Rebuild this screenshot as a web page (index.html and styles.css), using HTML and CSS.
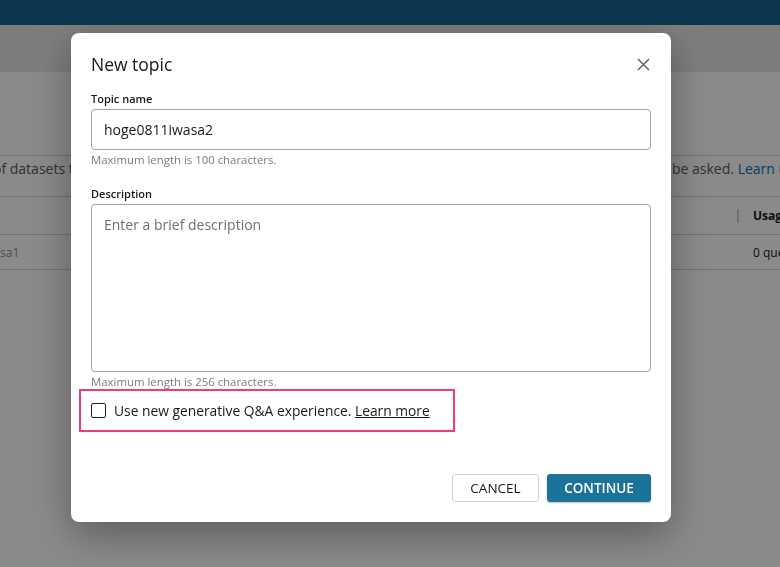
FILE: index.html
```html
<!DOCTYPE html>
<html lang="en">
<head>
<meta charset="utf-8">
<title>New topic</title>
<link rel="stylesheet" href="styles.css">
</head>
<body>
<div class="page">
  <header class="topbar"></header>
  <div class="subbar"></div>
  <main class="content">
    <div class="intro"></div>
    <div class="desc-row">
      <span class="desc-left">of datasets that users can ask questions about</span>
      <span class="desc-right">be asked. <a class="bg-link">Learn more</a></span>
    </div>
    <div class="trow thead">
      <span class="cell-left"></span>
      <span class="cell-right"><span class="sep"></span><b>Usage</b></span>
    </div>
    <div class="trow tbody">
      <span class="cell-left muted">sa1</span>
      <span class="cell-right cell-body">0 questions</span>
    </div>
  </main>
</div>

<div class="overlay">
  <section class="modal" role="dialog" aria-label="New topic">
    <div class="modal-head">
      <h2 class="modal-title">New topic</h2>
      <button class="close" aria-label="Close">
        <svg width="13" height="13" viewBox="0 0 13 13"><path d="M1 1 L12 12 M12 1 L1 12" stroke="#5f6368" stroke-width="1.5" fill="none"/></svg>
      </button>
    </div>

    <div class="field">
      <label class="label">Topic name</label>
      <div class="input">hoge0811iwasa2</div>
      <div class="help">Maximum length is 100 characters.</div>
    </div>

    <div class="field field-desc">
      <label class="label">Description</label>
      <div class="textarea"><span class="placeholder">Enter a brief description</span></div>
      <div class="help">Maximum length is 256 characters.</div>
    </div>

    <div class="highlight">
      <span class="checkbox"></span>
      <span class="check-text">Use new generative Q&amp;A experience. <a class="learn">Learn more</a></span>
    </div>

    <div class="actions">
      <button class="btn btn-cancel">CANCEL</button>
      <button class="btn btn-primary">CONTINUE</button>
    </div>
  </section>
</div>
</body>
</html>
```

FILE: styles.css
```css
* { box-sizing: border-box; }
html, body { margin: 0; padding: 0; }
body {
  width: 780px;
  height: 567px;
  overflow: hidden;
  font-family: "Open Sans", "Noto Sans", sans-serif;
  background: #ffffff;
  color: #16191f;
}

.page { width: 780px; }
.topbar { height: 25px; background: #0b3850; }
.subbar { height: 47px; background: #e8e8e8; }
.content { background: #ffffff; }
.intro { height: 83px; }
.desc-row {
  height: 41px;
  border-top: 1px solid #cfd4d4;
  display: flex;
  justify-content: space-between;
  align-items: flex-start;
  padding-top: 3px;
  font-size: 14px;
  line-height: 19px;
  color: #545b64;
  white-space: nowrap;
  overflow: hidden;
}
.desc-left { margin-left: -7px; }
.desc-right { width: 108px; overflow: hidden; }
.bg-link { color: #0073bb; }

.trow {
  display: flex;
  justify-content: space-between;
  align-items: center;
  border-top: 1px solid #cfd4d4;
  font-size: 12px;
  white-space: nowrap;
  overflow: hidden;
}
.thead { height: 38px; }
.tbody { height: 36px; border-bottom: 1px solid #cfd4d4; }
.cell-left { width: 60px; }
.cell-right { width: 43px; overflow: hidden; display: flex; align-items: center; }
.cell-body { width: 27px; }
.sep { display: block; width: 2px; height: 14px; background: #cfd4d4; margin-right: 14px; flex: none; }
.muted { color: #879596; }

.overlay {
  position: fixed;
  left: 0; right: 0; top: 25px; bottom: 0;
  background: rgba(0, 0, 0, 0.46);
  padding: 8px 0 0 71px;
}

.modal {
  width: 600px;
  height: 489px;
  background: #ffffff;
  border-radius: 8px;
  padding: 19px 20px 20px;
  display: flex;
  flex-direction: column;
  box-shadow: 0 12px 40px rgba(0, 0, 0, 0.35);
}

.modal-head {
  display: flex;
  justify-content: space-between;
  align-items: center;
  height: 24px;
}
.modal-title {
  margin: 0;
  font-size: 17.5px;
  font-weight: 500;
  line-height: 24px;
  color: #16191f;
}
.close {
  border: 0;
  background: none;
  padding: 0;
  margin-right: 1px;
  width: 13px;
  height: 13px;
  display: flex;
}

.field { display: flex; flex-direction: column; margin-top: 16px; }
.field-desc { margin-top: 20px; }
.label {
  font-size: 11px;
  line-height: 14px;
  font-weight: 600;
  color: #16191f;
}
.input {
  margin-top: 3px;
  height: 41px;
  border: 1px solid #a4a4a4;
  border-radius: 4px;
  padding: 0 12px;
  display: flex;
  align-items: center;
  font-size: 14px;
  color: #16191f;
}
.textarea {
  margin-top: 3px;
  height: 168px;
  border: 1px solid #a4a4a4;
  border-radius: 4px;
  padding: 10px 12px;
  font-size: 14px;
  line-height: 20px;
}
.placeholder { color: #6f6f6f; }
.help {
  margin-top: 3px;
  font-size: 11.4px;
  line-height: 14px;
  color: #7a7a7a;
}

.highlight {
  margin-top: 0;
  margin-left: -12px;
  width: 376px;
  height: 43px;
  border: 2px solid #f23d72;
  display: flex;
  align-items: center;
  padding-left: 10px;
}
.checkbox {
  width: 15px;
  height: 15px;
  border: 1.5px solid #1f1f1f;
  border-radius: 2px;
  flex: none;
}
.check-text {
  margin-left: 8px;
  font-size: 13.8px;
  color: #16191f;
}
.learn { color: #16191f; text-decoration: underline; }

.actions {
  margin-top: auto;
  display: flex;
  justify-content: flex-end;
  gap: 8px;
}
.btn {
  height: 28px;
  font-family: "Open Sans", "Noto Sans", sans-serif;
  font-size: 13.5px;
  border-radius: 3px;
  cursor: pointer;
}
.btn-cancel {
  width: 87px;
  background: #ffffff;
  border: 1px solid #cfcfcf;
  color: #16191f;
  font-weight: 500;
}
.btn-primary {
  width: 104px;
  background: #1b7399;
  border: 1px solid #1b7399;
  color: #ffffff;
  font-weight: 600;
  box-shadow: 0 1px 2px rgba(0, 0, 0, 0.25);
}
```
